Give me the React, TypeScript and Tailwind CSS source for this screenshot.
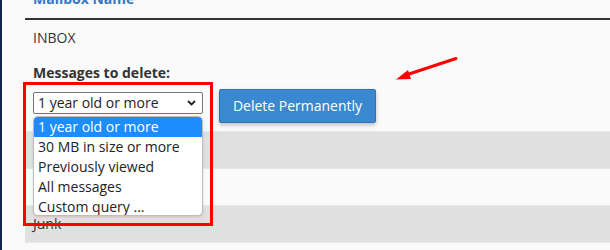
import React from "react";

export default function App() {
  const rows = [
    { name: "Sent", gray: true },
    { name: "Trash", gray: false },
    { name: "Junk", gray: true },
    { name: "Drafts", gray: false },
  ];
  const options = [
    "1 year old or more",
    "30 MB in size or more",
    "Previously viewed",
    "All messages",
    "Custom query ...",
  ];
  return (
    <div
      className="relative w-[610px] h-[250px] overflow-hidden bg-[#fafafa] border-l-[2px] border-[#10244a] text-[14px] text-[#333]"
      style={{ fontFamily: '"Open Sans", "Noto Sans", sans-serif' }}
    >
      <div className="ml-[23px]">
        {/* header */}
        <div className="h-[20px] px-[8px] border-b-[2px] border-[#333]">
          <div className="relative -top-[11px] leading-[20px] font-bold text-[#3178c6]">Mailbox Name</div>
        </div>
        {/* INBOX expanded row */}
        <div className="px-[8px] pt-[8px] pb-[8px]">
          <div className="leading-[20px]">INBOX</div>
          <div className="mt-[15px] leading-[20px] font-bold">Messages to delete:</div>
          <div className="mt-[6px] flex items-start gap-[16px]">
            <div className="relative mt-[3px]">
              <div className="w-[170px] h-[22px] border border-[#767676] rounded-[2px] bg-white flex items-center pl-[4px] leading-[20px] text-[#222]">
                1 year old or more
                <svg
                  className="absolute left-[154px] top-[8px]"
                  width="9"
                  height="6"
                  viewBox="0 0 9 6"
                >
                  <path d="M1 1 L4.5 4.5 L8 1" fill="none" stroke="#222" strokeWidth="1.8" />
                </svg>
              </div>
              {/* open list */}
              <div className="absolute left-0 top-[24px] z-10 w-[170px] h-[100px] bg-white border border-[#bdbdbd] rounded-[5px] overflow-hidden shadow-sm">
                {options.map((o, i) => (
                  <div
                    key={o}
                    className={
                      "h-[20px] leading-[20px] pl-[4px] " +
                      (i === 0 ? "bg-[#1e8cff] text-white" : "text-[#222]")
                    }
                  >
                    {o}
                  </div>
                ))}
              </div>
            </div>
            <button className="w-[157px] h-[34px] rounded-[2px] bg-[#3a88d0] border border-[#2f73b5] text-white text-[14px] leading-[20px] shadow-[0_2px_4px_rgba(0,0,0,0.25)]">
              Delete Permanently
            </button>
          </div>
        </div>
        {rows.map((r) => (
          <div
            key={r.name}
            className={
              "h-[37px] px-[8px] pt-[8px] leading-[20px] border-t border-[#e6e6e6] " +
              (r.gray ? "bg-[#e0e0e0]" : "bg-[#fafafa]")
            }
          >
            {r.name}
          </div>
        ))}
      </div>

      {/* red highlight box */}
      <div className="absolute left-[21px] top-[82px] w-[190px] h-[144px] border-[3px] border-[#ff0000] z-20 pointer-events-none" />

      {/* red arrow */}
      <svg
        className="absolute left-[388px] top-[50px] z-20"
        width="80"
        height="40"
        viewBox="390 50 80 40"
      >
        <path d="M456 58.5 L406 75" stroke="#ff0000" strokeWidth="3" strokeLinecap="round" fill="none" />
        <polygon points="396,79.5 408,70 411,79" fill="#ff0000" />
      </svg>
    </div>
  );
}
